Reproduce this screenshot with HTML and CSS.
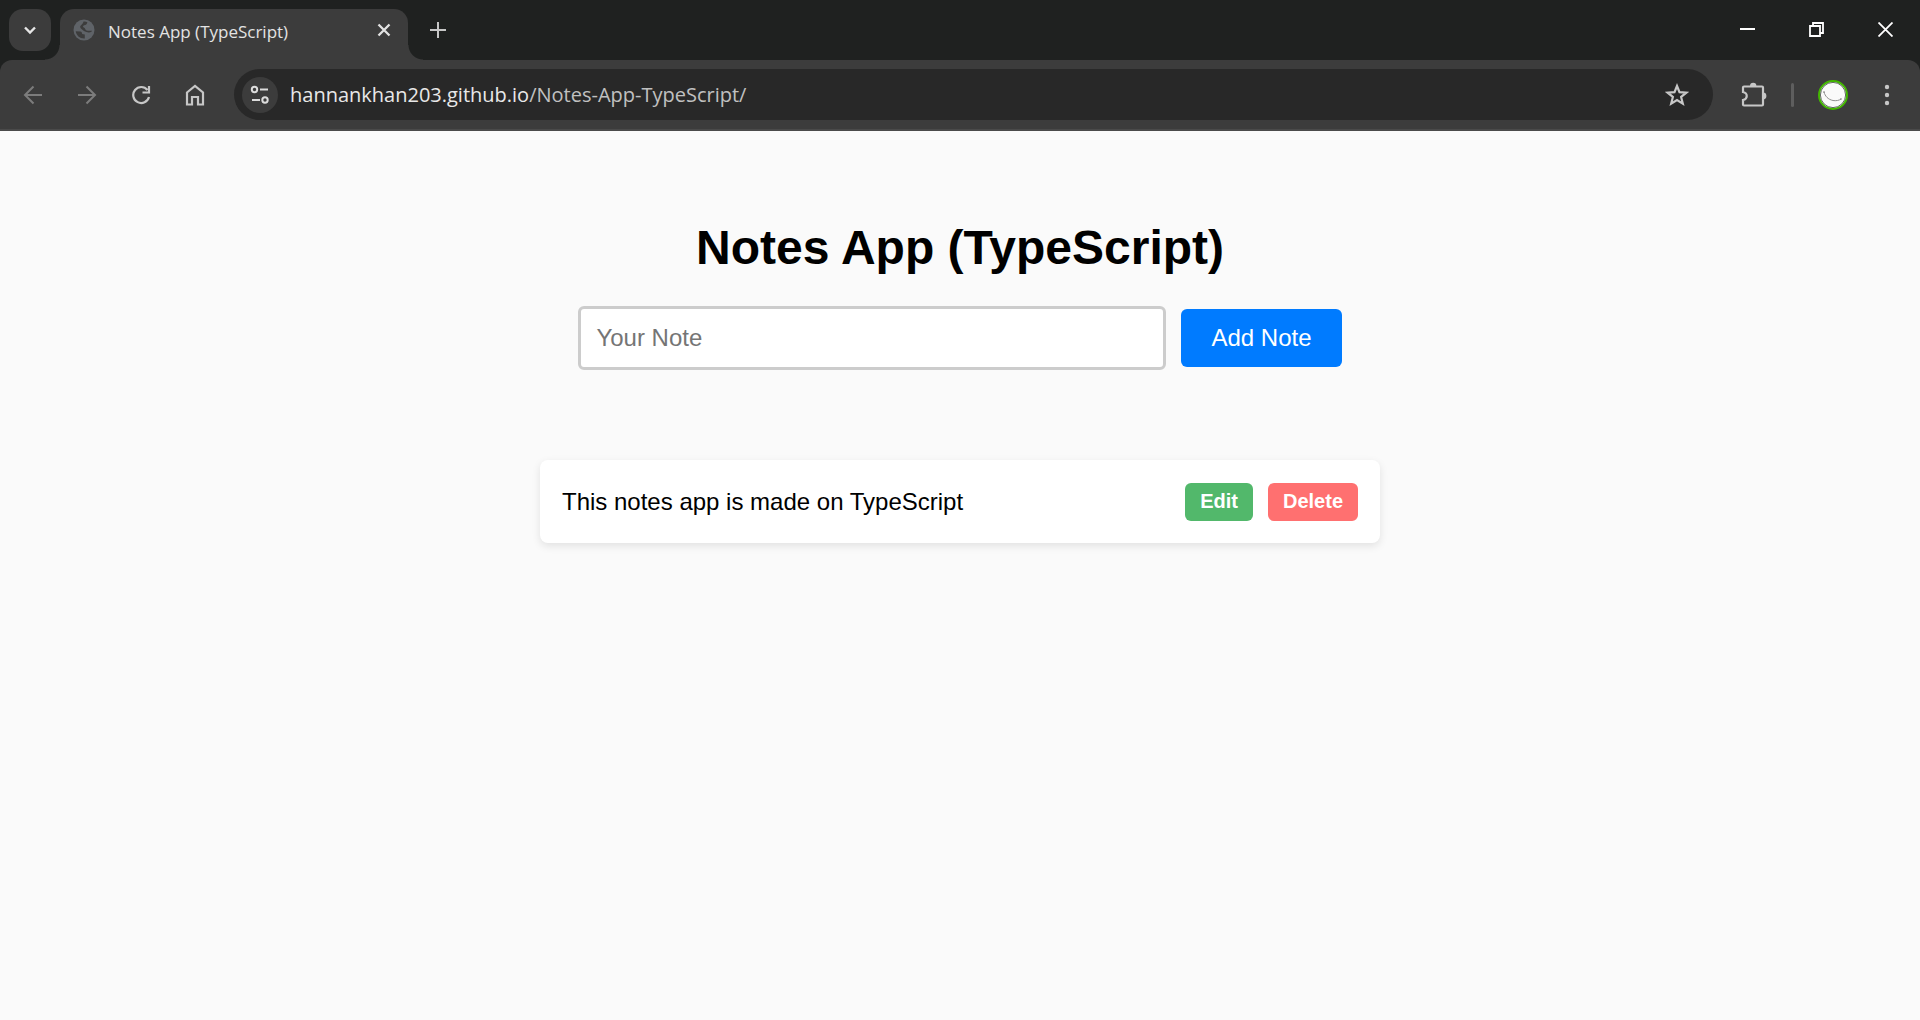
FILE: index.html
```html
<!DOCTYPE html>
<html lang="en">
<head>
<meta charset="utf-8">
<title>Notes App (TypeScript)</title>
<link rel="stylesheet" href="styles.css">
</head>
<body>
<header class="browser">
  <div class="tab-strip">
    <button class="tab-search" type="button" aria-label="Search tabs">
      <svg width="18" height="18" viewBox="0 0 18 18"><path d="M4 6.500l5 5 5-5" fill="none" stroke="#e6e6e6" stroke-width="2.400"/></svg>
    </button>
    <div class="tab">
      <svg class="favicon" width="22" height="22" viewBox="0 0 22 22">
        <circle cx="11" cy="11" r="10.500" fill="#5f6368"/>
        <path d="M10.500 2.600c1.500-.2 2.700 0 3.900.6-.4 2-1.500 2.800-3.200 3-1.400.2-1.600 1.900-.4 2.400 1.500.5 1.200 2.300 2.700 2.900 1.300.5 3.700.3 5.500.3-.2 1.500-2.700 2.100-4.300 1.500-1.700-.6-3.600-.6-4.700-2C9 10 7.200 9.700 7.200 8c0-1.700 2.700-2.300 3.300-5.400z" fill="#3c3c3c"/>
        <path d="M2.700 12.300l4.500.1c1.500.1 1.800 1.300 2 2.500l2.600.5v4.100c-4.900.3-8.500-2.900-9.100-7.200z" fill="#3c3c3c"/>
      </svg>
      <span class="tab-title">Notes App (TypeScript)</span>
      <button class="tab-close" type="button" aria-label="Close tab">
        <svg width="14" height="14" viewBox="0 0 14 14"><path d="M1.500 1.500l11 11M12.500 1.500l-11 11" stroke="#e3e3e3" stroke-width="2.300"/></svg>
      </button>
    </div>
    <button class="new-tab" type="button" aria-label="New tab">
      <svg width="16" height="16" viewBox="0 0 16 16"><path d="M8 0v16M0 8h16" stroke="#c7c7c7" stroke-width="2"/></svg>
    </button>
    <div class="window-controls">
      <button type="button" aria-label="Minimize"><svg width="15" height="15" viewBox="0 0 15 15"><path d="M0 7h15" stroke="#fff" stroke-width="2"/></svg></button>
      <button type="button" aria-label="Restore"><svg width="15" height="15" viewBox="0 0 15 15"><path d="M1 4h10v10H1zM4 4V1h10v10h-3" fill="none" stroke="#fff" stroke-width="1.800"/></svg></button>
      <button type="button" aria-label="Close"><svg width="15" height="15" viewBox="0 0 15 15"><path d="M.5.5l14 14M14.500.5l-14 14" stroke="#fff" stroke-width="1.800"/></svg></button>
    </div>
  </div>
  <div class="toolbar">
    <button class="tool" type="button" aria-label="Back"><svg width="20" height="20" viewBox="0 0 20 20"><path d="M19 10H2.500M10.500 1.500L2 10l8.500 8.500" fill="none" stroke="#7c7c7c" stroke-width="2"/></svg></button>
    <button class="tool" type="button" aria-label="Forward"><svg width="20" height="20" viewBox="0 0 20 20"><path d="M1 10h16.500M9.500 1.500L18 10l-8.500 8.500" fill="none" stroke="#7c7c7c" stroke-width="2"/></svg></button>
    <button class="tool" type="button" aria-label="Reload"><svg width="20" height="20" viewBox="0 0 20 20"><path d="M16.500 5A8 8 0 1 0 18 12M18 1v6.500h-6.500" fill="none" stroke="#c7c7c7" stroke-width="2.200"/></svg></button>
    <button class="tool" type="button" aria-label="Home"><svg width="20" height="22" viewBox="0 0 20 22"><path d="M2 8.500L10 2l8 6.500V20.500h-5V13H7v7.500H2z" fill="none" stroke="#c7c7c7" stroke-width="2.200"/></svg></button>
    <div class="omnibox">
      <button class="site-info" type="button" aria-label="View site information">
        <svg width="20" height="20" viewBox="0 0 20 20" fill="none" stroke="#dcdcdc" stroke-width="2"><circle cx="4.500" cy="4.500" r="2.700"/><path d="M10 4.500h8M2 15h8"/><circle cx="15" cy="15" r="2.700"/></svg>
      </button>
      <a class="url" href="#">hannankhan203.github.io<span class="url-path">/Notes-App-TypeScript/</span></a>
      <button class="bookmark" type="button" aria-label="Bookmark this tab">
        <svg width="24" height="24" viewBox="0 0 24 24"><path d="M12 3l2.500 6.200 6.800.5-5.200 4.300 1.700 6.600L12 17l-5.800 3.600L7.900 14 2.700 9.700l6.800-.5z" fill="none" stroke="#c7c7c7" stroke-width="2.200"/></svg>
      </button>
    </div>
    <button class="tool extensions" type="button" aria-label="Extensions">
      <svg width="26" height="26" viewBox="0 0 26 26"><path d="M3 4.500h18c.6 0 1 .4 1 1v17c0 .6-.4 1-1 1H3c-.6 0-1-.4-1-1V18c5-1 5-7 0-8V5.500c0-.6.4-1 1-1z" fill="none" stroke="#c7c7c7" stroke-width="2.200"/><path d="M9 4a3.200 3.200 0 0 1 6.400 0zM22 10.500a3.400 3.400 0 0 1 0 6.800z" fill="#c7c7c7"/></svg>
    </button>
    <span class="divider"></span>
    <button class="tool profile" type="button" aria-label="Profile">
      <svg width="30" height="30" viewBox="0 0 30 30"><circle cx="15" cy="15" r="14" fill="#fafafa" stroke="#43b800" stroke-width="2"/><circle cx="15" cy="15" r="12.600" fill="none" stroke="#3c463c" stroke-width=".8"/><path d="M6 12c1 4 4 7.500 9 8.500 3 .5 6 0 8-1.500" fill="none" stroke="#909090" stroke-width="1"/><circle cx="6" cy="12" r=".8" fill="#777"/><circle cx="23" cy="19" r=".8" fill="#777"/></svg>
    </button>
    <button class="tool" type="button" aria-label="Menu"><svg width="6" height="22" viewBox="0 0 6 22" fill="#c7c7c7"><circle cx="3" cy="3" r="2.200"/><circle cx="3" cy="11" r="2.200"/><circle cx="3" cy="19" r="2.200"/></svg></button>
  </div>
</header>
<main class="app">
  <h1 class="app-title">Notes App (TypeScript)</h1>
  <form class="note-form">
    <input class="note-input" type="text" placeholder="Your Note" aria-label="Your Note">
    <button class="add-note" type="button">Add Note</button>
  </form>
  <ul class="notes">
    <li class="note">
      <span class="note-text">This notes app is made on TypeScript</span>
      <button class="note-button edit" type="button">Edit</button>
      <button class="note-button delete" type="button">Delete</button>
    </li>
  </ul>
</main>
</body>
</html>
```

FILE: styles.css
```css
* {
  box-sizing: border-box;
}

body {
  margin: 0;
  min-height: 100vh;
  background: #fafafa;
  color: #000;
  font-family: "Liberation Sans", Arial, sans-serif;
}

button {
  margin: 0;
  padding: 0;
  border: 0;
  background: none;
  font-family: inherit;
}

svg {
  display: block;
}

/* Browser frame */
.browser {
  background: #1f2120;
  font-family: "Open Sans", sans-serif;
}

.browser button {
  display: flex;
  align-items: center;
  justify-content: center;
}

.tab-strip {
  display: flex;
  height: 60px;
  padding: 9px 0 0 9px;
}

.browser .tab-search {
  width: 42px;
  height: 42px;
  margin-right: 9px;
  border-radius: 14px;
  background: #3c3c3c;
}

.tab {
  position: relative;
  display: flex;
  align-items: center;
  width: 348px;
  height: 51px;
  padding: 0 12px 9px 13px;
  border-radius: 14px 14px 0 0;
  background: #3c3c3c;
}

/* Concave feet joining the tab to the toolbar */
.tab::before,
.tab::after {
  content: "";
  position: absolute;
  bottom: 0;
  width: 15px;
  height: 15px;
}

.tab::before {
  right: 100%;
  background: radial-gradient(circle at 0 0, transparent 14px, #3c3c3c 15px);
}

.tab::after {
  left: 100%;
  background: radial-gradient(circle at 100% 0, transparent 14px, #3c3c3c 15px);
}

.tab-title {
  flex: 1;
  margin-left: 13px;
  padding-top: 3px;
  color: #e3e3e3;
  font-size: 17px;
  line-height: 24px;
  white-space: nowrap;
}

.tab-close {
  width: 24px;
  height: 24px;
}

.new-tab {
  width: 42px;
  height: 42px;
  margin-left: 9px;
}

.window-controls {
  display: flex;
  margin: -9px 0 0 auto;
}

.window-controls button {
  width: 69px;
  height: 59px;
}

.toolbar {
  display: flex;
  align-items: center;
  height: 71px;
  padding: 0 6px 2px;
  border-radius: 12px 12px 0 0;
  background: linear-gradient(#4a4a4a, #4a4a4a) 0 100% / 100% 2px no-repeat #3c3c3c;
}

.tool {
  flex: none;
  width: 54px;
  height: 51px;
}

.omnibox {
  display: flex;
  flex: 1;
  align-items: center;
  height: 51px;
  margin-left: 12px;
  padding: 0 18px 0 8px;
  border-radius: 26px;
  background: #282828;
}

.browser .site-info {
  width: 36px;
  height: 36px;
  border-radius: 50%;
  background: #3c3c3c;
}

.url {
  flex: 1;
  margin-left: 12px;
  color: #e8e8e8;
  font-size: 20px;
  line-height: 28px;
  text-decoration: none;
  white-space: nowrap;
}

.url-path {
  color: #c0c0c0;
}

.bookmark {
  width: 36px;
  height: 36px;
}

.extensions {
  margin-left: 14px;
}

.divider {
  width: 3px;
  height: 24px;
  margin: 0 12px 0 10px;
  border-radius: 2px;
  background: #5e5e5e;
}

/* Notes page */
.app {
  display: flex;
  flex-direction: column;
  align-items: center;
  padding: 90px 24px;
}

.app-title {
  margin: 0;
  font-size: 48px;
  line-height: 54px;
}

.note-form {
  display: flex;
  align-items: center;
  gap: 15px;
  margin-top: 31px;
}

.note-input {
  width: 588px;
  height: 64px;
  padding: 0 15px;
  border: 3px solid #ccc;
  border-radius: 6px;
  background: #fff;
  font: inherit;
  font-size: 24px;
}

.note-input::placeholder {
  color: #757575;
}

.add-note {
  height: 58px;
  padding: 0 30px;
  border-radius: 6px;
  background: #007bff;
  color: #fff;
  font-size: 24px;
}

.notes {
  width: 100%;
  max-width: 840px;
  margin: 90px 0 0;
  padding: 0;
  list-style: none;
}

.note {
  display: flex;
  align-items: center;
  gap: 15px;
  padding: 23px 22px 22px;
  border-radius: 8px;
  background: #fff;
  box-shadow: 0 3px 8px rgba(0, 0, 0, 0.1);
}

.note-text {
  flex: 1;
  font-size: 24px;
  line-height: 30px;
}

.note-button {
  height: 38px;
  padding: 0 15px 2px;
  border-radius: 6px;
  color: #fff;
  font-size: 20px;
  font-weight: bold;
}

.edit {
  background: #52b86b;
}

.delete {
  background: #ff7070;
}
```
